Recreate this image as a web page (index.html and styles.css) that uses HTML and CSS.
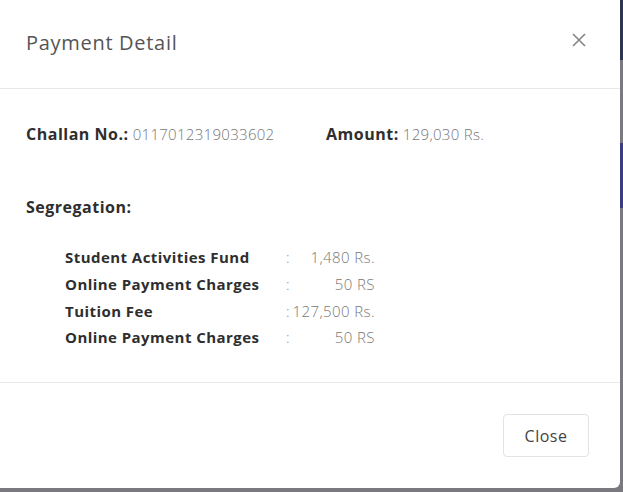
FILE: index.html
```html
<!DOCTYPE html>
<html>
<head>
<meta charset="utf-8">
<link rel="stylesheet" href="styles.css">
</head>
<body>
<div class="page">
  <div class="modal">
    <div class="modal-header">
      <h2 class="modal-title">Payment Detail</h2>
      <button class="close-x" aria-label="Close">
        <svg width="14" height="14" viewBox="0 0 14 14"><path d="M1 1L13 13M13 1L1 13" stroke="#858585" stroke-width="1.6" fill="none"/></svg>
      </button>
    </div>
    <div class="modal-body">
      <div class="summary">
        <div><span class="key">Challan No.:</span> <span class="val">0117012319033602</span></div>
        <div><span class="key">Amount:</span> <span class="val">129,030 Rs.</span></div>
      </div>
      <div class="seg-title">Segregation:</div>
      <table class="seg">
        <tr><td class="lbl">Student Activities Fund</td><td class="colon">:</td><td class="amt">1,480 Rs.</td></tr>
        <tr><td class="lbl">Online Payment Charges</td><td class="colon">:</td><td class="amt">50 RS</td></tr>
        <tr><td class="lbl">Tuition Fee</td><td class="colon">:</td><td class="amt">127,500 Rs.</td></tr>
        <tr><td class="lbl">Online Payment Charges</td><td class="colon">:</td><td class="amt">50 RS</td></tr>
      </table>
    </div>
    <div class="modal-footer">
      <button class="btn-close">Close</button>
    </div>
  </div>
  <div class="backdrop-strip"></div>
</div>
</body>
</html>
```

FILE: styles.css
```css
html, body {
  margin: 0;
  padding: 0;
}
body {
  background: #7a7980;
  font-family: "Open Sans", "DejaVu Sans", sans-serif;
  width: 623px;
  height: 492px;
  overflow: hidden;
}
.page {
  display: flex;
  height: 492px;
}
.modal {
  width: 620px;
  height: 488px;
  background: #fff;
  border-bottom-right-radius: 6px;
  display: flex;
  flex-direction: column;
  flex: none;
}
.backdrop-strip {
  flex: 1;
  background: linear-gradient(to bottom,
    #2b3550 0, #2b3550 60px,
    #7a7980 60px, #7a7980 143px,
    #3a3d82 143px, #3a3d82 208px,
    #7a7980 208px);
}
.modal-header {
  height: 89px;
  box-sizing: border-box;
  border-bottom: 1px solid #e8e8e8;
  display: flex;
  align-items: flex-start;
  justify-content: space-between;
  padding: 30px 34px 0 26px;
}
.modal-title {
  margin: 0;
  font-size: 20px;
  line-height: 26px;
  font-weight: 400;
  letter-spacing: 0.7px;
  color: #555;
}
.close-x {
  border: 0;
  background: none;
  padding: 0;
  margin-top: 3px;
  width: 14px;
  height: 14px;
  display: flex;
}
.modal-body {
  padding: 35px 26px 0 26px;
  height: 294px;
  box-sizing: border-box;
  border-bottom: 1px solid #e8e8e8;
}
.summary {
  display: grid;
  grid-template-columns: 300px auto;
  line-height: 20px;
}
.key {
  font-size: 16px;
  font-weight: 700;
  letter-spacing: 0.5px;
  color: #2e2e2e;
}
.val {
  font-size: 15px;
  font-weight: 300;
  letter-spacing: 0.3px;
  color: #777;
}
.seg-title {
  margin-top: 53px;
  font-size: 16px;
  line-height: 20px;
  font-weight: 700;
  letter-spacing: 0.5px;
  color: #2e2e2e;
}
.seg {
  margin: 27px 0 0 39px;
  border-collapse: collapse;
  font-size: 15px;
}
.seg td {
  padding: 0;
  height: 26.7px;
  line-height: 20px;
}
.seg .lbl {
  font-weight: 700;
  letter-spacing: 0.45px;
  color: #2e2e2e;
  width: 221px;
}
.seg .colon {
  font-weight: 300;
  color: #888;
  padding-right: 3px;
}
.seg .amt {
  font-weight: 300;
  letter-spacing: 0.4px;
  color: #777;
  text-align: right;
}
.modal-footer {
  flex: 1;
  display: flex;
  justify-content: flex-end;
  align-items: flex-start;
  padding: 31px 31px 0 0;
}
.btn-close {
  width: 86px;
  height: 43px;
  background: #fff;
  border: 1px solid #e3e3e3;
  border-radius: 4px;
  font-family: inherit;
  font-size: 16px;
  letter-spacing: 0.5px;
  color: #444;
  padding: 0;
}
```
